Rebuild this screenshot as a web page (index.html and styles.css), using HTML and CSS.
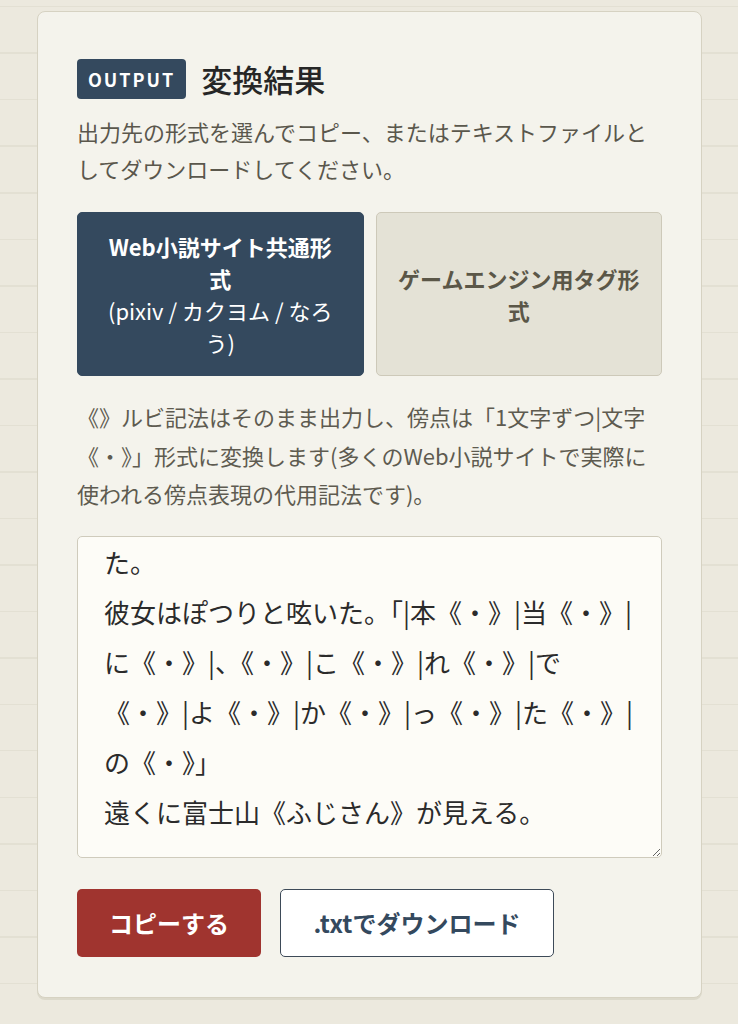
FILE: index.html
```html
<!DOCTYPE html>
<html lang="ja">
<head>
  <meta charset="UTF-8">
  <title>変換結果</title>
  <link rel="stylesheet" href="styles.css">
</head>
<body>

  <section class="card">
    <div class="card-head">
      <span class="badge">OUTPUT</span>
      <h2>変換結果</h2>
    </div>
    <p class="lead">出力先の形式を選んでコピー、またはテキストファイルとしてダウンロードしてください。</p>

    <div class="formats">
      <button class="format active">Web小説サイト共通形式<span class="sub">(pixiv / カクヨム / なろう)</span></button>
      <button class="format">ゲームエンジン用タグ形式</button>
    </div>

    <p class="note">《》ルビ記法はそのまま出力し、傍点は「1文字ずつ|文字《・》」形式に変換します(多くのWeb小説サイトで実際に使われる傍点表現の代用記法です)。</p>

    <textarea id="output" class="output" readonly>た。
彼女はぽつりと呟いた。「|本《・》|当《・》|
に《・》|、《・》|こ《・》|れ《・》|で
《・》|よ《・》|か《・》|っ《・》|た《・》|
の《・》」
遠くに富士山《ふじさん》が見える。</textarea>

    <div class="actions">
      <button class="btn btn-copy">コピーする</button>
      <button class="btn btn-download">.txtでダウンロード</button>
    </div>
  </section>

</body>
</html>
```

FILE: styles.css
```css
body {
  margin: 0;
  padding: 11px 36px 40px 37px;
  font-family: "Noto Sans CJK JP", "Noto Sans", sans-serif;
  color: #2a2a2a;
  background-color: #ece9de;
  background-image: repeating-linear-gradient(
    to bottom,
    #ece9de 0, #ece9de 6px,
    #e3e0d3 6px, #e3e0d3 7.5px,
    #ece9de 7.5px, #ece9de 46.5px
  );
}

.card {
  background-color: #f4f3ec;
  border: 1.5px solid #d6d2c2;
  border-radius: 8px;
  box-shadow: 0 2px 0 #dcd9cb;
  padding: 44px 39px 40px;
}

.card-head {
  display: flex;
  align-items: center;
  gap: 15px;
}

.badge {
  display: inline-flex;
  align-items: center;
  height: 40px;
  padding: 0 11px;
  border-radius: 4px;
  background-color: #34495e;
  color: #fff;
  font-size: 18px;
  font-weight: bold;
  letter-spacing: 2px;
}

h2 {
  margin: 0;
  font-size: 31px;
  font-weight: 500;
  color: #262626;
}

.lead {
  margin: 12px 0 0;
  font-size: 22px;
  line-height: 37px;
  color: #5a574c;
}

.formats {
  display: grid;
  grid-template-columns: 1fr 1fr;
  gap: 12px;
  margin-top: 25px;
}

.format {
  height: 164px;
  padding: 0 20px;
  border: 1.5px solid #cdc9b9;
  border-radius: 5px;
  background-color: #e4e2d6;
  color: #5b5748;
  font-family: inherit;
  font-size: 22px;
  font-weight: bold;
  line-height: 32px;
  cursor: pointer;
}

.format.active {
  background-color: #34495e;
  border-color: #34495e;
  color: #fff;
}

.format .sub {
  display: block;
  font-weight: normal;
}

.note {
  margin: 21px 0 0;
  font-size: 22px;
  line-height: 38.5px;
  color: #5e5b50;
}

.output {
  display: block;
  box-sizing: border-box;
  width: 100%;
  height: 322px;
  margin-top: 23px;
  padding: 0 10px 0 26px;
  border: 1.5px solid #cfcbbc;
  border-radius: 5px;
  background-color: #fdfcf7;
  color: #2b2b2b;
  font-family: "Noto Sans CJK JP", "Noto Sans", sans-serif;
  font-size: 26px;
  line-height: 50px;
  overflow: hidden;
  resize: vertical;
}

.actions {
  display: flex;
  gap: 19px;
  margin-top: 31px;
}

.btn {
  height: 68px;
  border-radius: 5px;
  font-family: inherit;
  font-size: 24px;
  font-weight: bold;
  cursor: pointer;
}

.btn-copy {
  width: 184px;
  border: none;
  background-color: #a0342f;
  color: #fff;
}

.btn-download {
  width: 274px;
  border: 1.5px solid #3d4a58;
  background-color: #fff;
  color: #34495e;
}
```
